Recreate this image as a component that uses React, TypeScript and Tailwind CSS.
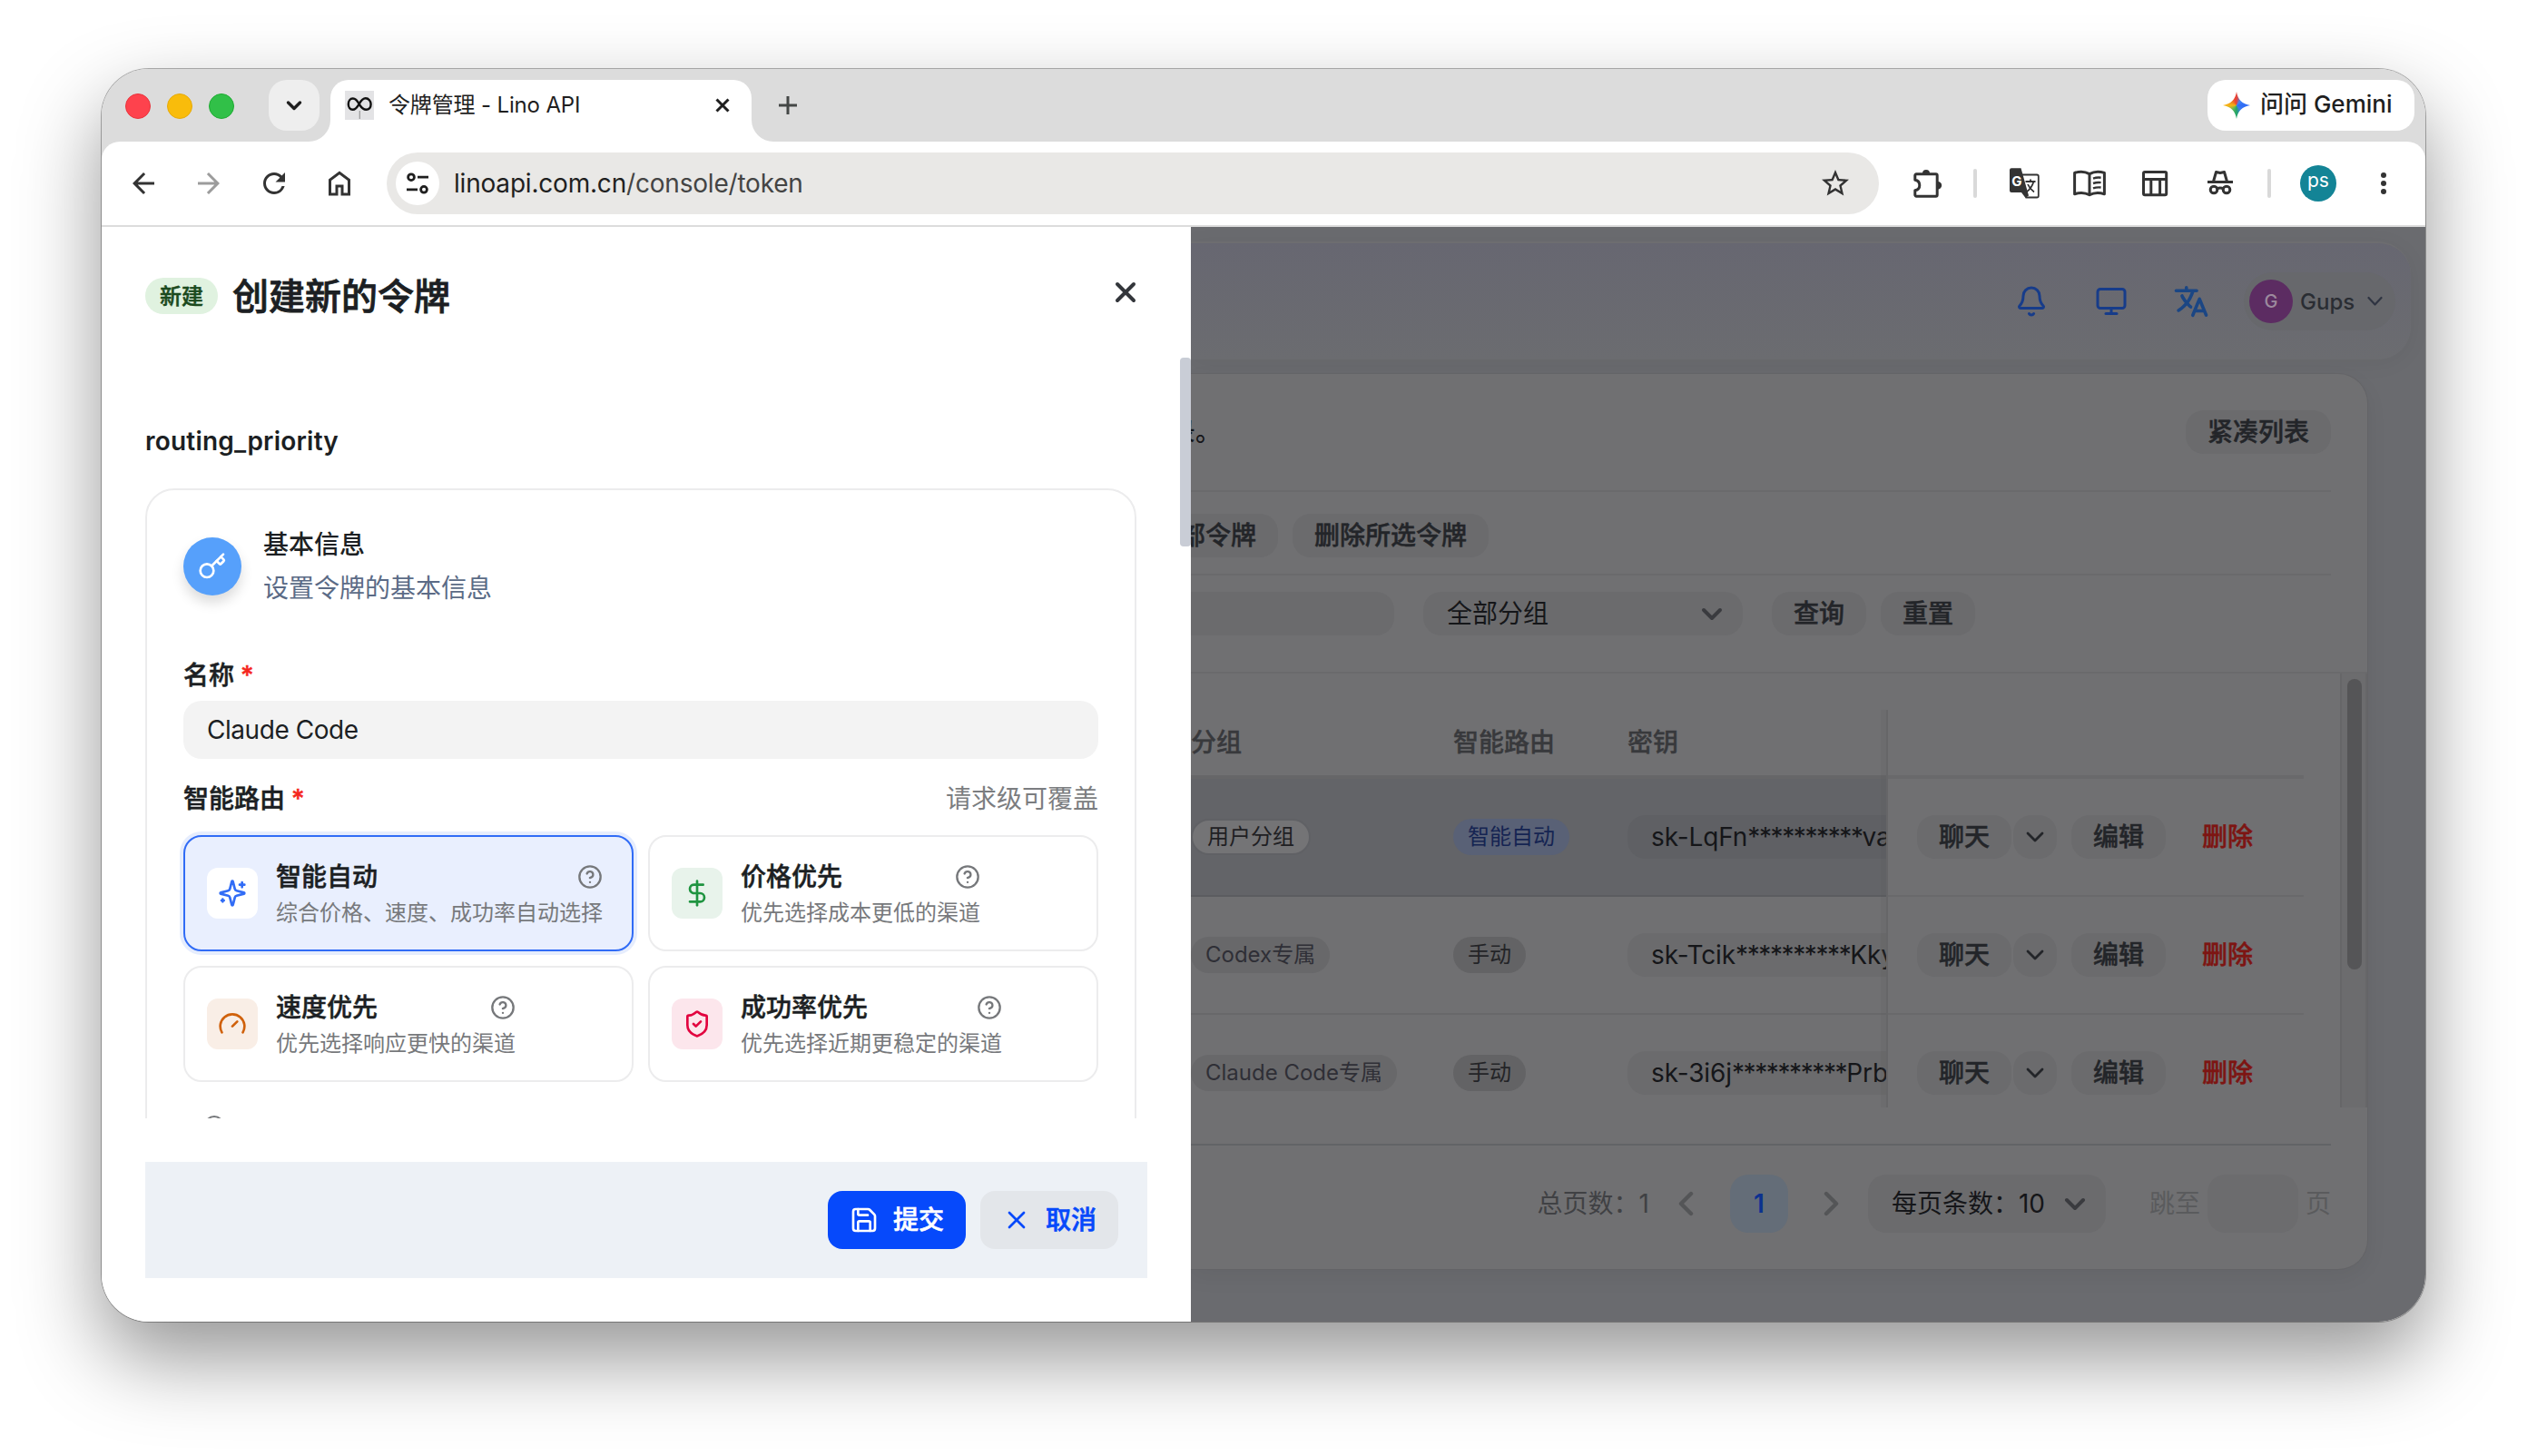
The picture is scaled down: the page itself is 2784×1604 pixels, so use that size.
import type { ReactNode } from 'react';
import { Bell, CircleHelp, DollarSign, Gauge, Key, Monitor, Save, ShieldCheck, X } from 'lucide-react';
import { IoLanguage } from 'react-icons/io5';
import { MdArrowBack, MdArrowForward, MdRefresh, MdStarOutline } from 'react-icons/md';

interface RouteOption {
    title: string;
    description: string;
    icon: ReactNode;
    iconClass: string;
    active?: boolean;
}

interface TokenRow {
    group: string;
    groupClass: string;
    route: string;
    routeClass: string;
    keyStart: string;
    keyEnd: string;
    keyClass: string;
    rowClass: string;
}

const routeOptions: RouteOption[] = [
    {
        title: '智能自动',
        description: '综合价格、速度、成功率自动选择',
        icon: <SparkIcon />,
        iconClass: 'bg-white text-[#316cf6]',
        active: true,
    },
    {
        title: '价格优先',
        description: '优先选择成本更低的渠道',
        icon: <DollarSign size={32} />,
        iconClass: 'bg-[#e8f3eb] text-[#1f9440]',
    },
    {
        title: '速度优先',
        description: '优先选择响应更快的渠道',
        icon: <Gauge size={32} />,
        iconClass: 'bg-[#f9eee6] text-[#d0610b]',
    },
    {
        title: '成功率优先',
        description: '优先选择近期更稳定的渠道',
        icon: <ShieldCheck size={32} />,
        iconClass: 'bg-[#fce6ec] text-[#e2043f]',
    },
];

const tokenRows: TokenRow[] = [
    {
        group: '用户分组',
        groupClass: 'border-2 border-[#606165] bg-[#747476] px-4 text-[#1f2023]',
        route: '智能自动',
        routeClass: 'bg-[#596176] text-[#152452]',
        keyStart: 'sk-LqFn',
        keyEnd: 'va',
        keyClass: 'bg-[#5f6064]',
        rowClass: 'border-[#5b5c60] bg-[#636468]',
    },
    {
        group: 'Codex专属',
        groupClass: 'bg-[#68686a] px-4 text-[#2f2f36]',
        route: '手动',
        routeClass: 'bg-[#636365] text-[#232427]',
        keyStart: 'sk-Tcik',
        keyEnd: 'Kky',
        keyClass: 'bg-[#6b6b6d]',
        rowClass: 'border-[#68686a]',
    },
    {
        group: 'Claude Code专属',
        groupClass: 'bg-[#68686a] px-4 text-[#2f2f36]',
        route: '手动',
        routeClass: 'bg-[#636365] text-[#232427]',
        keyStart: 'sk-3i6j',
        keyEnd: 'Prb',
        keyClass: 'bg-[#6b6b6d]',
        rowClass: 'border-[#68686a]',
    },
];

function SparkIcon() {
    return (
        <svg width="32" height="32" viewBox="0 0 24 24" fill="none" stroke="currentColor" strokeWidth="2" strokeLinecap="round" strokeLinejoin="round">
            <path d="M9.937 15.5A2 2 0 0 0 8.5 14.063l-6.135-1.582a.5.5 0 0 1 0-.962L8.5 9.936A2 2 0 0 0 9.937 8.5l1.582-6.135a.5.5 0 0 1 .963 0L14.063 8.5A2 2 0 0 0 15.5 9.937l6.135 1.581a.5.5 0 0 1 0 .964L15.5 14.063a2 2 0 0 0-1.437 1.437l-1.582 6.135a.5.5 0 0 1-.963 0z" />
            <path d="M20 3v4M22 5h-4M4 17v2M5 18H3" />
        </svg>
    );
}

function Chevron({ d, width, height, stroke }: { d: string; width: number; height: number; stroke: number }) {
    return (
        <svg width={width} height={height} viewBox={`0 0 ${width} ${height}`} fill="none" stroke="currentColor" strokeWidth={stroke} strokeLinecap="round" strokeLinejoin="round" className="shrink-0">
            <path d={d} />
        </svg>
    );
}

function HomeIcon() {
    return (
        <svg width="36" height="36" viewBox="0 0 24 24" fill="currentColor">
            <path d="M6 19h3v-6h6v6h3v-9l-6-4.5L6 10zm-2 2V9l8-6 8 6v12h-7v-6h-2v6z" />
        </svg>
    );
}

function TuneIcon() {
    return (
        <svg width="24" height="24" viewBox="0 0 24 24" fill="none" stroke="#1f1f1f" strokeWidth="2.8">
            <circle cx="5" cy="5.2" r="3.4" />
            <circle cx="19" cy="18.8" r="3.4" />
            <path d="M12 5.2h12M0 18.8h12" />
        </svg>
    );
}

function PuzzleIcon() {
    return (
        <svg width="36" height="36" viewBox="0 0 36 36" fill="none">
            <path d="M7.2 7.8h21.6a1.4 1.4 0 0 1 1.4 1.4v21.6a1.4 1.4 0 0 1-1.4 1.4H7.2a1.4 1.4 0 0 1-1.4-1.4v-5c3.4-.6 5-2.8 5-5.8s-1.6-5.2-5-5.8V9.2a1.4 1.4 0 0 1 1.4-1.4z" stroke="currentColor" strokeWidth="3" strokeLinejoin="round" />
            <path d="M14 7a4 4 0 0 1 8 0zM31 16a4.2 4.2 0 0 1 0 8.4z" fill="currentColor" />
        </svg>
    );
}

function TranslateIcon() {
    return (
        <svg width="40" height="40" viewBox="0 0 40 40" fill="none" stroke="currentColor" strokeWidth="1.8">
            <path d="M17 10.5h17a1.8 1.8 0 0 1 1.8 1.8v21.4a1.8 1.8 0 0 1-1.8 1.8H21.5" />
            <path d="M21.5 18h11M27 15.5v2.5M30.5 18c-1.5 5-4.5 9-8 11.5M24 21c1.5 3.5 4 6.5 7 8.5" />
            <path d="M6 3.3h10.5L25 33.5l-3.5 2.5-4.5-6H6a2 2 0 0 1-2-2V5.3a2 2 0 0 1 2-2z" fill="currentColor" stroke="none" />
            <text x="6.3" y="22.8" fill="#fff" stroke="none" className="text-[15px] font-bold">G</text>
        </svg>
    );
}

function BookIcon() {
    return (
        <svg width="40" height="40" viewBox="0 0 40 40" fill="none" stroke="currentColor" strokeWidth="3" strokeLinejoin="round">
            <path d="M20 9.6C15.5 7 9 6.600 3.600 8.400v23.400c5.400-1.800 11.900-1.500 16.400 1 4.500-2.500 11-2.800 16.400-1V8.400C31 6.600 24.500 7 20 9.600zM20 9.600v23" />
            <path d="M24 14.600c2.800-1 5.700-1.300 8.600-.9M24 20c2.800-1 5.700-1.300 8.600-.9M24 25.400c2.800-1 5.700-1.300 8.600-.9" strokeWidth="2.400" />
        </svg>
    );
}

function TableIcon() {
    return (
        <svg width="40" height="40" viewBox="0 0 40 40" fill="none" stroke="currentColor" strokeWidth="3">
            <rect x="7.5" y="7.5" width="25.2" height="25.2" rx="1.5" />
            <path d="M7.5 15.5h25M15.8 15.5v17M25.6 15.5v17" />
        </svg>
    );
}

function IncognitoIcon() {
    return (
        <svg width="40" height="40" viewBox="0 0 40 40" fill="none" stroke="currentColor" strokeWidth="3">
            <path d="M6 18.5h28" />
            <path d="M12.5 18l3-10.5 4.5 1 4.5-1 3 10.5" strokeLinejoin="round" />
            <circle cx="13" cy="27" r="3.8" />
            <circle cx="27" cy="27" r="3.8" />
            <path d="M16.5 26c2-1.2 5-1.2 7 0" />
        </svg>
    );
}

function GeminiIcon() {
    return (
        <span className="h-[30px] w-[30px] bg-[conic-gradient(from_0deg,#ea4335_0deg,#4285f4_40deg,#2f6cf6_90deg,#3b7bf0_140deg,#22a565_180deg,#5cb85c_220deg,#f9b414_270deg,#f08c1c_300deg,#ea4335_345deg)] [clip-path:path('M15_0C16.200_8.500_21.500_13.800_30_15C21.500_16.200_16.200_21.500_15_30C13.800_21.500_8.500_16.200_0_15C8.500_13.800_13.800_8.500_15_0Z')]" />
    );
}

function TabStrip() {
    return (
        <div className="flex h-20 bg-[#dcdcdc] pl-[26px] pr-3">
            <div className="mt-[27px] flex gap-[18px]">
                <span className="h-7 w-7 rounded-full border border-[#e8343c] bg-[#fe424d]" />
                <span className="h-7 w-7 rounded-full border border-[#e5a90b] bg-[#f9bc0b]" />
                <span className="h-7 w-7 rounded-full border border-[#1fab33] bg-[#31c048]" />
            </div>
            <div className="ml-[38px] mt-3 flex h-14 w-14 items-center justify-center rounded-[20px] bg-[#eeeeee] text-[#1f1f1f]">
                <Chevron d="M2.5 3l6.5 6.5 6.5-6.5" width={18} height={13} stroke={3.4} />
            </div>
            <div className="relative ml-3 mt-3 flex w-[464px] items-start rounded-t-[20px] bg-white pl-4 pr-6 pt-3">
                <svg className="absolute bottom-0 right-full" width="24" height="24"><path d="M24 0v24H0A24 24 0 0 0 24 0z" fill="#fff" /></svg>
                <svg className="absolute bottom-0 left-full" width="24" height="24"><path d="M0 0v24h24A24 24 0 0 1 0 0z" fill="#fff" /></svg>
                <svg width="32" height="32" viewBox="0 0 32 32" fill="none" className="shrink-0 bg-[#e3e3e5]">
                    <path d="M15.8 15c-2-4-4-6.500-7-6.500-3.200 0-5 3-5 6.300s1.800 6 4.800 6c3.400 0 5.200-3 7.200-6.500s3.800-6 7-6 5.800 3 5.800 6.500-2 6-5.200 6c-3.400 0-5.600-2.800-7.600-5.800z" stroke="#111" strokeWidth="2.4" />
                    <path d="M16.3 22v9" stroke="#999" strokeWidth="1.2" />
                </svg>
                <span className="ml-4 grow whitespace-nowrap text-[24px] leading-8 tracking-[-0.15px] text-[#1f1f1f]">令牌管理 - Lino API</span>
                <svg width="16" height="32" viewBox="0 0 16 32" stroke="#1f1f1f" strokeWidth="3"><path d="M1.5 9.5l13 13M14.5 9.5l-13 13" /></svg>
            </div>
            <svg className="ml-[30px] mt-[30px]" width="20" height="20" viewBox="0 0 20 20" stroke="#444746" strokeWidth="3"><path d="M10 0v20M0 10h20" /></svg>
            <div className="ml-auto mt-3 flex h-14 w-[228px] items-center rounded-[20px] bg-white pl-[17px] text-[#1f1f1f]">
                <GeminiIcon />
                <span className="ml-[11px] whitespace-nowrap pb-0.5 text-[26px] font-medium leading-8">问问 Gemini</span>
            </div>
        </div>
    );
}

function Toolbar() {
    return (
        <div className="flex h-[92px] items-center rounded-t-[20px] bg-white px-7 text-[#333333]">
            <div className="flex items-center gap-9">
                <MdArrowBack size={36} />
                <MdArrowForward size={36} className="text-[#9c9c9c]" />
                <MdRefresh size={36} />
                <HomeIcon />
            </div>
            <div className="ml-[34px] flex h-[68px] grow items-center rounded-full bg-[#e9e8e6] pl-[10px] pr-[30px]">
                <div className="flex h-12 w-12 items-center justify-center rounded-full bg-white"><TuneIcon /></div>
                <span className="ml-4 grow text-[28px] tracking-[-0.2px] text-[#444444]"><span className="text-[#1f1f1f]">linoapi.com.cn</span>/console/token</span>
                <MdStarOutline size={36} />
            </div>
            <div className="ml-[34px] flex items-center">
                <PuzzleIcon />
                <span className="ml-[34px] h-8 w-1 rounded-full bg-[#d9d9d9]" />
                <div className="mx-8 flex items-center gap-8">
                    <TranslateIcon />
                    <BookIcon />
                    <TableIcon />
                    <IncognitoIcon />
                </div>
                <span className="h-8 w-1 rounded-full bg-[#d9d9d9]" />
                <span className="ml-8 flex h-10 w-10 items-center justify-center rounded-full bg-[#138496] pb-1.5 text-[21px] text-white">ps</span>
                <svg className="ml-[34px]" width="36" height="36" viewBox="0 0 36 36" fill="currentColor">
                    <circle cx="18" cy="9" r="3" />
                    <circle cx="18" cy="18" r="3" />
                    <circle cx="18" cy="27" r="3" />
                </svg>
            </div>
        </div>
    );
}

function RouteCard({ option }: { option: RouteOption }) {
    return (
        <div className={`flex h-32 items-center rounded-[20px] border-2 px-6 ${option.active ? 'border-[#316cf6] bg-[#e9effe] shadow-[0_0_0_4px_#e6edfd]' : 'border-[#ececed] bg-white'}`}>
            <div className={`flex h-14 w-14 shrink-0 items-center justify-center rounded-xl ${option.iconClass}`}>{option.icon}</div>
            <div className="ml-5 flex flex-col pt-1">
                <div className="flex h-10 items-center justify-between">
                    <span className="text-[28px] font-medium leading-10 text-[#1c1f23] [-webkit-text-stroke:0.5px]">{option.title}</span>
                    <CircleHelp size={28} className="text-[#76787b]" />
                </div>
                <span className="whitespace-nowrap text-[24px] leading-10 text-[#77797c]">{option.description}</span>
            </div>
        </div>
    );
}

function Drawer() {
    return (
        <section className="relative flex w-[1200px] shrink-0 flex-col bg-white text-[#1c1f23]">
            <header className="flex h-[144px] items-center pl-12 pr-[60px]">
                <span className="mt-2 flex h-10 w-20 items-center justify-center rounded-full bg-[#e0f2e0] pt-px text-[24px] font-medium text-[#1b4a1e] [-webkit-text-stroke:0.5px]">新建</span>
                <h1 className="ml-4 mt-2.5 grow text-[40px] font-medium leading-[56px] [-webkit-text-stroke:0.8px]">创建新的令牌</h1>
                <svg width="24" height="24" viewBox="0 0 24 24" stroke="#33363b" strokeWidth="4" strokeLinecap="round"><path d="M3 3l18 18M21 3L3 21" /></svg>
            </header>

            <div className="h-[838px] overflow-hidden pl-12 pr-[60px]">
                <p className="mt-[72px] text-[28px] font-semibold leading-10 tracking-[0.22px]">routing_priority</p>
                <div className="mt-8 h-[900px] rounded-[32px] border-2 border-[#ececed] px-10 pt-[38px]">
                    <div className="flex items-center">
                        <span className="flex h-16 w-16 items-center justify-center rounded-full bg-[#56a0fb] text-white shadow-[0_8px_14px_rgba(0,0,0,0.14)]"><Key size={32} /></span>
                        <div className="ml-6">
                            <h2 className="text-[28px] font-medium leading-[44px]">基本信息</h2>
                            <p className="mt-1 text-[28px] leading-[44px] text-[#5b6b86]">设置令牌的基本信息</p>
                        </div>
                    </div>

                    <label className="mt-[54px] flex text-[28px] font-medium leading-10 [-webkit-text-stroke:0.5px]">名称<span className="ml-[7px] text-[#f5261d]">*</span></label>
                    <div className="mt-2 flex h-16 items-center rounded-[20px] bg-[#f3f3f3] px-[26px] text-[28px] tracking-[-0.45px]">Claude Code</div>

                    <div className="mt-6 flex justify-between text-[28px] leading-10">
                        <label className="font-medium [-webkit-text-stroke:0.5px]">智能路由<span className="ml-[7px] text-[#f5261d]">*</span></label>
                        <span className="text-[#7b7d80]">请求级可覆盖</span>
                    </div>
                    <div className="mt-5 grid grid-cols-2 gap-4">
                        {routeOptions.map((option) => (
                            <RouteCard key={option.title} option={option} />
                        ))}
                    </div>
                    <CircleHelp size={24} className="ml-[22px] mt-9 text-[#76787b]" />
                </div>
            </div>

            <footer className="ml-12 mr-12 mt-12 flex h-32 items-center justify-end gap-4 bg-[#edf1f6] pr-8 text-[28px] font-medium">
                <button className="flex h-16 w-[152px] items-center gap-4 rounded-2xl bg-[#0649fb] px-6 text-white"><Save size={32} className="shrink-0" /><span className="whitespace-nowrap [-webkit-text-stroke:0.6px]">提交</span></button>
                <button className="flex h-16 w-[152px] items-center gap-4 rounded-2xl bg-[#e3e6ea] px-6 text-[#0649fb]"><X size={32} className="shrink-0" /><span className="whitespace-nowrap [-webkit-text-stroke:0.6px]">取消</span></button>
            </footer>

            {/* scroll thumb sits on the drawer edge */}
            <span className="absolute right-0 top-[144px] h-52 w-3 rounded bg-[#c9cdd6]" />
        </section>
    );
}

function PillButton({ children, className = '' }: { children: ReactNode; className?: string }) {
    return (
        <button className={`flex h-12 shrink-0 items-center whitespace-nowrap rounded-[20px] bg-[#6b6b6d] px-6 text-[28px] font-medium text-[#232529] [-webkit-text-stroke:0.5px] ${className}`}>{children}</button>
    );
}

function TokenTable() {
    return (
        <div className="flex h-[478px] overflow-hidden">
            <div className="relative w-[768px] overflow-hidden pt-10">
                <div className="flex h-[76px] items-center border-b-4 border-[#666668] text-[28px] font-medium text-[#38393c] [-webkit-text-stroke:0.4px]">
                    <span className="w-[289px]">分组</span>
                    <span className="w-48">智能路由</span>
                    <span>密钥</span>
                </div>
                {tokenRows.map((row) => (
                    <div key={row.group} className={`flex h-[130px] items-center border-b-2 ${row.rowClass}`}>
                        <div className="w-[289px] shrink-0">
                            <span className={`inline-flex h-10 items-center whitespace-nowrap rounded-full text-[24px] ${row.groupClass}`}>{row.group}</span>
                        </div>
                        <div className="w-48 shrink-0">
                            <span className={`inline-flex h-10 items-center rounded-full px-4 text-[24px] ${row.routeClass}`}>{row.route}</span>
                        </div>
                        <div className={`flex h-12 w-[400px] shrink-0 items-center rounded-[20px] pl-[26px] text-[28px] tracking-[-0.1px] text-[#151619] ${row.keyClass}`}>
                            {row.keyStart}<span className="tracking-[-1.4px]">**********</span>{row.keyEnd}
                        </div>
                    </div>
                ))}
                <span className="absolute bottom-0 right-0 top-10 w-2 border-r-2 border-[#666668] bg-[#5a565a]/15" />
            </div>
            <div className="w-[458px] pt-10">
                <div className="h-[76px] border-b-4 border-[#69696b]" />
                {tokenRows.map((row) => (
                    <div key={row.group} className="flex h-[130px] items-center border-b-2 border-[#69696b] pl-8">
                        <PillButton>聊天</PillButton>
                        <PillButton className="ml-0.5 w-12 justify-center px-0"><Chevron d="M2 2l8 8 8-8" width={20} height={12} stroke={2.8} /></PillButton>
                        <PillButton className="ml-4">编辑</PillButton>
                        <span className="ml-10 text-[28px] font-medium text-[#7d1512] [-webkit-text-stroke:0.5px]">删除</span>
                    </div>
                ))}
            </div>
            <div className="ml-10 w-[30px] border-x-2 border-[#666668] bg-[#6c6c6e] pl-1.5 pt-1.5">
                <div className="h-80 w-4 rounded-full bg-[#555557]" />
            </div>
        </div>
    );
}

function ConsolePage() {
    return (
        <main className="flex grow flex-col overflow-hidden bg-[#6a6b6f] pt-4">
            <header className="mr-4 flex h-[130px] shrink-0 items-center justify-end rounded-r-[36px] border-t-2 border-[#6d6d70] bg-gradient-to-b from-[#676771] to-[#6b6c70] pr-[17px] shadow-[0_4px_24px_rgba(0,0,0,0.05)]">
                <Bell size={36} className="text-[#173c8a]" />
                <Monitor size={36} className="ml-[52px] text-[#173c8a]" />
                <IoLanguage size={42} className="ml-[49px] text-[#1b4684]" />
                <div className="ml-[37px] flex h-16 items-center rounded-full bg-[#67686c] pl-1.5 pr-3.5">
                    <span className="flex h-12 w-12 items-center justify-center rounded-full bg-[#5c2c62] text-[20px] font-medium text-[#9c8a9e]">G</span>
                    <span className="ml-2 w-[66px] pt-0.5 text-[24px] font-medium text-[#2a2d33]">Gups</span>
                    <span className="ml-2 text-[#2f3442]"><Chevron d="M1.5 2l7 7.5 7-7.5" width={17} height={12} stroke={2.2} /></span>
                </div>
            </header>

            <div className="mr-16 mt-4 flex h-[986px] shrink-0 flex-col overflow-hidden rounded-r-[32px] bg-[#707072] shadow-[0_0_0_1px_#646467,0_8px_24px_rgba(0,0,0,0.06)]">
                <div className="mr-10 flex h-[130px] items-center justify-between overflow-hidden border-b-2 border-[#6a6a6c]">
                    <span className="-ml-[23px] text-[28px] font-medium text-[#151619]">录。</span>
                    <PillButton>紧凑列表</PillButton>
                </div>
                <div className="mr-10 flex h-[92px] gap-4 border-b-2 border-[#6a6a6c] pt-6">
                    <PillButton className="w-24 justify-end overflow-hidden rounded-l-none">部令牌</PillButton>
                    <PillButton>删除所选令牌</PillButton>
                </div>
                <div className="flex h-[108px] items-start border-b-2 border-[#6a6a6c] pt-[18px]">
                    <div className="h-12 w-56 rounded-r-[20px] bg-[#6b6b6d]" />
                    <div className="ml-8 flex h-12 w-[352px] items-center justify-between rounded-[20px] bg-[#6b6b6d] pl-[26px] pr-[22px] text-[28px] text-[#151619]">
                        全部分组
                        <span className="text-[#3a3b3f]"><Chevron d="M3 3l9 9 9-9" width={24} height={15} stroke={4} /></span>
                    </div>
                    <PillButton className="ml-8">查询</PillButton>
                    <PillButton className="ml-4">重置</PillButton>
                </div>
                <TokenTable />
                <div className="mr-10 mt-10 flex items-center justify-end border-t-2 border-[#626366] pt-8 text-[28px]">
                    <span className="text-[#404144]">总页数：1</span>
                    <span className="ml-[31px] text-[#545557]"><Chevron d="M15 3L4 14l11 11" width={18} height={28} stroke={4.4} /></span>
                    <span className="ml-10 flex h-16 w-16 items-center justify-center rounded-[20px] bg-[#646d78] font-semibold text-[#0c3190]">1</span>
                    <span className="ml-[39px] text-[#545557]"><Chevron d="M3 3l11 11L3 25" width={18} height={28} stroke={4.4} /></span>
                    <div className="ml-[31px] flex h-16 w-[262px] items-center justify-between rounded-[20px] bg-[#6b6b6d] pl-[26px] pr-[22px] text-[#151619]">
                        每页条数：10
                        <span className="text-[#3a3b3f]"><Chevron d="M3 3l9 9 9-9" width={24} height={15} stroke={4} /></span>
                    </div>
                    <span className="ml-12 text-[#5a5b5d]">跳至</span>
                    <span className="mx-2 h-16 w-[100px] rounded-[20px] bg-[#6c6c6e]" />
                    <span className="text-[#5a5b5d]">页</span>
                </div>
            </div>
        </main>
    );
}

export default function App() {
    return (
        <div className="h-[1604px] w-[2784px] overflow-hidden bg-white px-28 pt-[76px] font-['Inter','Noto_Sans_CJK_SC',sans-serif]">
            <div className="h-[1380px] w-[2560px] rounded-[52px] shadow-[0_0_0_1px_rgba(0,0,0,0.3),0_40px_90px_rgba(0,0,0,0.42)]">
                <div className="flex h-full flex-col overflow-hidden rounded-[52px] bg-[#dcdcdc]">
                    <TabStrip />
                    <Toolbar />
                    <div className="flex grow border-t-2 border-[#dcdcdc]">
                        <Drawer />
                        <ConsolePage />
                    </div>
                </div>
            </div>
        </div>
    );
}
